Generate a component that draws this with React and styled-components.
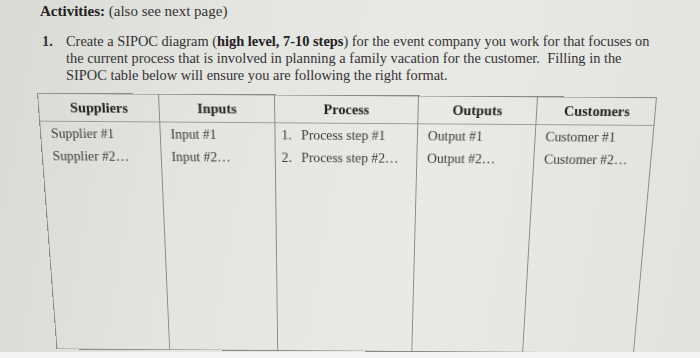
import React from 'react'
import styled, { createGlobalStyle } from 'styled-components'

const Global = createGlobalStyle`
  html, body {
    margin: 0;
    padding: 0;
  }
  body {
    width: 700px;
    height: 358px;
    overflow: hidden;
    background: linear-gradient(100deg, #d9d9d6 0%, #e4e4e1 30%, #e9e9e6 60%, #e2e2df 100%);
    font-family: "Liberation Serif", "Times New Roman", serif;
    color: #2e2e2e;
  }
`

const Page = styled.div`
  height: 358px;
  padding: 2px 0 0 37px;
  box-sizing: border-box;
  border-bottom: 6px solid #f3f3f1;
  overflow: hidden;
`

const Heading = styled.div`
  margin-left: 3px;
  font-size: 15px;
  line-height: 18px;
  color: #333;
  b {
    font-weight: bold;
    color: #222;
  }
`

const Item = styled.div`
  display: flex;
  margin-top: 13px;
  margin-left: 5px;
  font-size: 14.4px;
  line-height: 17px;
  color: #333;
`

const Num = styled.span`
  width: 24px;
  flex: none;
  font-weight: bold;
`

const Para = styled.p`
  margin: 0;
  white-space: nowrap;
  b {
    color: #222;
  }
`

const Table = styled.div`
  display: grid;
  grid-template-columns: 121px 116px 144px 119px 120px;
  grid-template-rows: 29px 254px;
  width: 620px;
  margin-top: 11px;
  border: 1px solid #8a8a88;
  box-sizing: border-box;
  transform-origin: 50% 0;
  transform: perspective(1000px) rotateZ(0.4deg) rotateX(-15deg);
`

const Head = styled.div`
  display: flex;
  align-items: center;
  justify-content: center;
  font-weight: bold;
  font-size: 14.3px;
  color: #222;
  border-bottom: 1px solid #9a9a98;
  border-right: ${(p) => (p.last ? 'none' : '1px solid #8a8a88')};
`

const Cell = styled.div`
  padding: ${(p) => (p.list ? '1px 0 0 6px' : '1px 0 0 10px')};
  font-size: 13.8px;
  color: #3a3a3a;
  border-right: ${(p) => (p.last ? 'none' : '1px solid #8a8a88')};
`

const Line = styled.div`
  line-height: 24px;
  display: flex;
`

const ListNo = styled.span`
  width: 20px;
`

const cols = [
  { title: 'Suppliers', rows: ['Supplier #1', 'Supplier #2…'] },
  { title: 'Inputs', rows: ['Input #1', 'Input #2…'] },
  { title: 'Process', rows: ['Process step #1', 'Process step #2…'], list: true },
  { title: 'Outputs', rows: ['Output #1', 'Output #2…'] },
  { title: 'Customers', rows: ['Customer #1', 'Customer #2…'] },
]

const App = () => {
  return (
    <>
      <Global />
      <Page>
        <Heading>
          <b>Activities:</b> (also see next page)
        </Heading>
        <Item>
          <Num>1.</Num>
          <Para>
            Create a SIPOC diagram (<b>high level, 7-10 steps</b>) for the event company you work for that focuses on
            <br />
            the current process that is involved in planning a family vacation for the customer.&nbsp; Filling in the
            <br />
            SIPOC table below will ensure you are following the right format.
          </Para>
        </Item>
        <Table>
          {cols.map((c, i) => (
            <Head key={c.title} last={i === cols.length - 1}>
              {c.title}
            </Head>
          ))}
          {cols.map((c, i) => (
            <Cell key={c.title} list={c.list} last={i === cols.length - 1}>
              {c.rows.map((r, j) => (
                <Line key={r}>
                  {c.list && <ListNo>{j + 1}.</ListNo>}
                  {r}
                </Line>
              ))}
            </Cell>
          ))}
        </Table>
      </Page>
    </>
  )
}

export default App
